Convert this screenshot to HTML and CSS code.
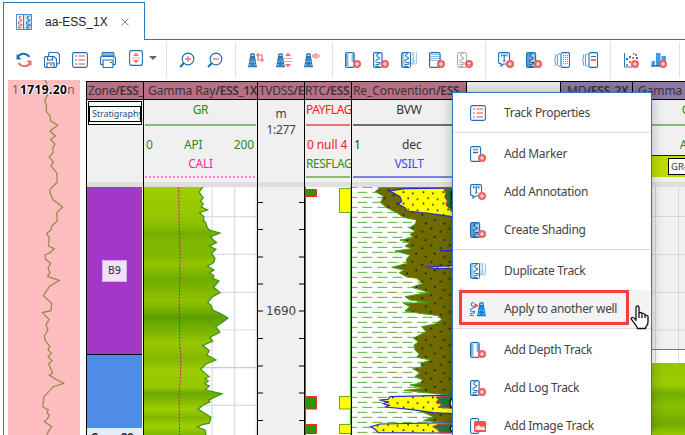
FILE: index.html
```html
<!DOCTYPE html>
<html lang="en">
<head>
<meta charset="utf-8">
<title>aa-ESS_1X</title>
<link rel="stylesheet" href="styles.css">
</head>
<body>
<svg class="defs" width="0" height="0">
  <defs>
    <symbol id="plus" viewBox="0 0 8 8"><circle cx="4" cy="4" r="4" fill="#e85f62"/><path d="M4 1.8v4.4M1.8 4h4.4" stroke="#ffd0d0" stroke-width="1.4"/></symbol>
    <symbol id="squig" viewBox="0 0 5 14"><path d="M3.8.5Q1 1 1.2 2.500T3.500 4.500 1.200 7 3.500 9.500 1.300 11.500 3.800 13.500" fill="none" stroke="currentColor" stroke-width="1.200"/></symbol>
    <symbol id="tower" viewBox="0 0 10 16"><path d="M3.300 1h3.400l2.300 14M3.300 1 1 15M2.800 4h4.400M2.300 8h5.400M1.800 12h6.400M0 15.300h10M3.200 4l4.400 4M6.800 4 2.400 8M2.400 8l5.800 4M7.600 8l-6 4M2 12l6 3M8 12l-6 3M3 1.500h4" fill="none" stroke="currentColor" stroke-width="1.250"/></symbol>
    <symbol id="i-list" viewBox="0 0 16 16"><rect x=".6" y=".6" width="14.800" height="14.800" rx="1.800" fill="#fff" stroke="#1f6fb8" stroke-width="1.100"/><path d="M3 4h2M3 8h2M3 12h2M6.500 4h6.500M6.500 8h6.500M6.500 12h6.500" stroke="#ee8585" stroke-width="1.500"/></symbol>
    <symbol id="i-refresh" viewBox="0 0 16 16"><path d="M1.800 5C4 .8 10.500.8 13.500 5" fill="none" stroke="#1f6fb8" stroke-width="2"/><path d="M.5 2v5.500h5z" fill="#1f6fb8"/><path d="M14.200 11C12 15.200 5.500 15.200 2.500 11" fill="none" stroke="#ed6a6a" stroke-width="2"/><path d="M15.500 14V8.500h-5z" fill="#ed6a6a"/></symbol>
    <symbol id="i-save" viewBox="0 0 16 16"><path d="M4.500 4V1.500l1-1h8l2 2V11l-1 1h-2" fill="none" stroke="#1f6fb8" stroke-width="1.100"/><path d="M1.500 4.500h8.500l2.500 2.500v7.500l-1 1h-10l-1-1v-9z" fill="#fff" stroke="#1f6fb8" stroke-width="1.100"/><path d="M3.500 5v3h5V5M3 15.500v-4.500h7v4.500M7 12v2" fill="none" stroke="#1f6fb8" stroke-width="1.200"/></symbol>
    <symbol id="i-print" viewBox="0 0 16 16"><path d="M2 4V1.500q0-1 1-1h10q1 0 1 1V4z" fill="#8db9df" stroke="#1f6fb8"/><path d="M3 12.500H1.500q-1 0-1-1V6.500q0-2 2-2h11q2 0 2 2v5q0 1-1 1H13" fill="#fff" stroke="#1f6fb8" stroke-width="1.200"/><path d="M3 8h10v6.500q0 1-1 1H4q-1 0-1-1z" fill="#fff" stroke="#1f6fb8" stroke-width="1.200"/><path d="M10 10.500h2M13 6h1" stroke="#1f6fb8"/></symbol>
    <symbol id="i-fit" viewBox="0 0 16 16"><rect x="1.600" y=".6" width="12.800" height="14.800" rx="2" fill="#fff" stroke="#1f6fb8" stroke-width="1.100"/><path d="M8 2.500 11 6H5zM8 13.500 11 10H5z" fill="#ee7979"/><path d="M4 8h8" stroke="#ee9b9b"/></symbol>
    <symbol id="i-zin" viewBox="0 0 16 16"><circle cx="9" cy="7" r="5.800" fill="#fff" stroke="#1f6fb8" stroke-width="1.200"/><path d="m5 11-4 4" stroke="#1f6fb8" stroke-width="2"/><path d="M9 4v6M6 7h6" stroke="#ec7777" stroke-width="1.400"/></symbol>
    <symbol id="i-zout" viewBox="0 0 16 16"><circle cx="9" cy="7" r="5.800" fill="#fff" stroke="#1f6fb8" stroke-width="1.200"/><path d="m5 11-4 4" stroke="#1f6fb8" stroke-width="2"/><path d="M6 7h6" stroke="#ec7777" stroke-width="1.400"/></symbol>
    <symbol id="i-wcrop" viewBox="0 0 16 16"><use href="#tower" width="9" height="16" color="#2878bd"/><path d="M10 1v7h6M8 3h6v7" fill="none" stroke="#e66" stroke-width="1.200"/></symbol>
    <symbol id="i-wfit" viewBox="0 0 16 16"><use href="#tower" width="9" height="16" color="#2878bd"/><path d="m12 .5 3 3.500H9zM12 15.500 15 12H9z" fill="#ee7070"/><path d="M8 6.500h8M8 9.500h8" stroke="#eea0a0"/></symbol>
    <symbol id="i-weye" viewBox="0 0 16 16"><use href="#tower" width="9" height="16" color="#2878bd"/><path d="M8 4q3.800-4 7.600 0-3.800 4-7.600 0z" fill="#fff" stroke="#e66"/><circle cx="11.800" cy="4" r="1.500" fill="#e99"/></symbol>
    <symbol id="i-depth" viewBox="0 0 16 16"><rect x=".6" y=".6" width="8.500" height="14.800" rx="1.500" fill="#fff" stroke="#1f6fb8" stroke-width="1.200"/><path d="M1 3h2.500M1 5h2.500M1 7h2.500M1 9h2.500M1 11h2.500M1 13h2.500M6.500 3H9M6.500 5H9M6.500 7H9M6.500 9H9" stroke="#1f6fb8"/><use href="#plus" x="8" y="8" width="8" height="8"/></symbol>
    <symbol id="i-log" viewBox="0 0 16 16"><rect x=".6" y=".6" width="8.500" height="14.800" rx="1.500" fill="#fff" stroke="#1f6fb8" stroke-width="1.200"/><use href="#squig" x="2.500" y="1" width="5" height="14" color="#2878bd"/><use href="#plus" x="8" y="8" width="8" height="8"/></symbol>
    <symbol id="i-dup" viewBox="0 0 16 16"><path d="M9 .8h3.500v9.700H9M15.400.5v9.500q0 2-2 2H10" fill="none" stroke="#a9c8e4" stroke-width="1.200"/><use href="#squig" x="10" y="1" width="4" height="11" color="#a9c8e4"/><rect x=".6" y=".6" width="8.800" height="14.800" rx="1.500" fill="#a9cdec" stroke="#1f6fb8" stroke-width="1.100"/><path d="M3.500 1H9v14H3.500z" fill="#fff"/><use href="#squig" x="3.500" y="1" width="5" height="14" color="#2878bd"/></symbol>
    <symbol id="i-grid" viewBox="0 0 16 16"><rect x=".6" y=".6" width="10.500" height="14.800" rx="1.500" fill="#fff" stroke="#1f6fb8" stroke-width="1.200"/><path d="M1.500 2.500h9M1.500 4.500h9M1.500 6.500h9M1.500 8.500h9" stroke="#2878bd" stroke-dasharray="1 1"/><use href="#plus" x="8" y="8" width="8" height="8"/></symbol>
    <symbol id="i-del" viewBox="0 0 16 16"><rect x=".6" y=".6" width="9" height="14.800" rx="1.500" fill="#fff" stroke="#aaa"/><use href="#squig" x="2.500" y="1" width="5" height="14" color="#aaa"/><circle cx="12" cy="12" r="4" fill="#e85f62"/><path d="m10.500 10.500 3 3m0-3-3 3" stroke="#ffe4e4" stroke-width="1.200"/></symbol>
    <symbol id="i-note" viewBox="0 0 16 16"><path d="M2 .6h8q1.500 0 1.500 1.500v8.400q0 1.500-1.500 1.500H5.500L3 14v-2.500H2Q.6 11.500.6 10V2Q.6.6 2 .6z" fill="#fff" stroke="#1f6fb8" stroke-width="1.100"/><path d="M3.500 4.500V3h5.500v1.500M6.250 3v6M5 9h2.500" fill="none" stroke="#1f6fb8" stroke-width="1.100"/><use href="#plus" x="8" y="8" width="8" height="8"/></symbol>
    <symbol id="i-shade" viewBox="0 0 16 16"><rect x=".6" y=".6" width="9" height="14.800" rx="1.500" fill="#a5cbea" stroke="#1f6fb8" stroke-width="1.200"/><path d="M1 1h3v14H1z" fill="#2878bd" opacity=".5"/><use href="#squig" x="3" y="1" width="5" height="14" color="#165c9f"/><use href="#plus" x="8" y="8" width="8" height="8"/></symbol>
    <symbol id="i-cards1" viewBox="0 0 16 16"><path d="M2 2Q-.5 8 2 14M6 1.500Q3.500 1.500 3.500 4v8q0 2.500 2.500 2.500" fill="none" stroke="#5b99cf"/><rect x="7" y=".6" width="8.500" height="14.800" rx="1.500" fill="#fff" stroke="#1f6fb8" stroke-width="1.100"/><path d="M9 3.500h5M9 5.500h5M9 7.500h5M9 9.500h5M9 11.500h5" stroke="#e66" stroke-dasharray="1 1"/></symbol>
    <symbol id="i-cards2" viewBox="0 0 16 16"><path d="M2 2Q-.5 8 2 14M6 1.500Q3.500 1.500 3.500 4v8q0 2.500 2.500 2.500" fill="none" stroke="#5b99cf"/><rect x="7" y=".6" width="8.500" height="14.800" rx="1.500" fill="#fff" stroke="#1f6fb8" stroke-width="1.100"/><path d="M9 4.500h5" stroke="#2878bd" stroke-width="1.200"/><path d="M9 8h5" stroke="#e66" stroke-width="2"/></symbol>
    <symbol id="i-scatter" viewBox="0 0 16 16"><path d="M1.500 1v14H9" fill="none" stroke="#2878bd"/><path d="M3 12h2v2H3zM6 9h2v2H6zM9 5h2v2H9zM12 2h2v2h-2z" fill="#e66"/><path d="M3 6h2v2H3zM6 4h2v2H6zM10 1h1.500v1.500H10zM13 5h2v2h-2z" fill="#2878bd"/><use href="#plus" x="8" y="8" width="8" height="8"/></symbol>
    <symbol id="i-bars" viewBox="0 0 16 16"><path d="M.5 9h3.500v5H.5zM10.500 4H15v8h-4.500z" fill="#4b9be0"/><path d="M5 1h4.500v13H5z" fill="#4299ea"/><path d="M0 14h9" stroke="#1f6fb8" stroke-width="1.500"/><use href="#plus" x="8" y="8" width="8" height="8"/></symbol>
    <symbol id="i-marker" viewBox="0 0 16 16"><rect x=".6" y=".6" width="10" height="14.800" rx="1.500" fill="#fff" stroke="#1f6fb8" stroke-width="1.100"/><path d="M3 3.500h5" stroke="#e66" stroke-width="1.500"/><path d="M3 6.500h5" stroke="#1f6fb8" stroke-width="1.500"/><use href="#plus" x="8" y="8" width="8" height="8"/></symbol>
    <symbol id="i-apply" viewBox="0 0 16 16"><use href="#squig" y="1" width="5" height="14" color="#1687dc"/><path d="m4.500 2 4 2.500-4 2.500z" fill="#f04949"/><use href="#tower" x="7" width="9" height="16" color="#0a80dc"/></symbol>
    <symbol id="i-image" viewBox="0 0 16 16"><rect x=".6" y=".6" width="8" height="14.800" rx="1.500" fill="#fff" stroke="#1f6fb8" stroke-width="1.100"/><rect x="4" y="3" width="12" height="11" rx="1.500" fill="#e95555"/><path d="m5.500 12v-3l3-2 3 2 2-1 1.500 2v2z" fill="#ffdcdc"/></symbol>
    <symbol id="i-doc" viewBox="0 0 16 16"><rect x=".6" y=".6" width="14.800" height="14.800" fill="#d3e6f6" stroke="#3b82c0"/><path d="M1 1h6v14H1z" fill="#fff"/><path d="M7.500 1v14" stroke="#3b82c0"/><use href="#squig" x="2" y="1" width="4.500" height="14" color="#dd6666"/><use href="#squig" x="10" y="1" width="4.500" height="14" color="#2878bd"/></symbol>

    <linearGradient id="gr" x1="0" y1="333" x2="0" y2="1077" gradientUnits="userSpaceOnUse">
      <stop offset="0" stop-color="#a0cc00"/><stop offset=".1" stop-color="#98c800"/><stop offset=".16" stop-color="#88bd00"/><stop offset=".185" stop-color="#73ad00"/><stop offset=".22" stop-color="#81b700"/><stop offset=".28" stop-color="#80b800"/><stop offset=".31" stop-color="#94c500"/><stop offset=".37" stop-color="#70ac00"/><stop offset=".4" stop-color="#78b200"/><stop offset=".46" stop-color="#90c300"/><stop offset=".525" stop-color="#5ca000"/><stop offset=".57" stop-color="#74b000"/><stop offset=".63" stop-color="#98c800"/><stop offset=".69" stop-color="#82b800"/><stop offset=".74" stop-color="#9ccb00"/><stop offset=".81" stop-color="#94c500"/><stop offset=".832" stop-color="#69a900"/><stop offset=".895" stop-color="#9dcd00"/><stop offset=".93" stop-color="#82b700"/><stop offset=".965" stop-color="#a0d000"/><stop offset="1" stop-color="#80b800"/>
    </linearGradient>
    <linearGradient id="gr2" x1="0" y1="0" x2="0" y2="1"><stop offset="0" stop-color="#97c500"/><stop offset=".3" stop-color="#9acd00"/><stop offset=".43" stop-color="#72af00"/><stop offset=".6" stop-color="#8bc000"/><stop offset=".85" stop-color="#70ad00"/><stop offset="1" stop-color="#9aca00"/></linearGradient>
    <pattern id="shale" x="187" y="327" width="45" height="30" patternUnits="userSpaceOnUse"><path d="M0 7h30M-15 22h30M30 22h30" stroke="#3fa512" stroke-width="2.600"/></pattern>
    <pattern id="silt" x="330" y="350" width="56" height="50" patternUnits="userSpaceOnUse"><path d="M0 0h56v50H0z" fill="#6f6b00"/><path d="M5 5h5v5H5zM34 14h5v5h-5zM16 30h5v5h-5zM45 40h5v5h-5z" fill="#151500"/></pattern>
    <pattern id="sand" x="300" y="340" width="60" height="34" patternUnits="userSpaceOnUse"><path d="M0 0h60v34H0z" fill="#ff0"/><path d="M8 6h5v5H8zM36 10h5v5h-5zM22 24h5v5h-5zM50 27h5v5h-5z" fill="#332f00"/></pattern>
  </defs>
</svg>

<div class="app">
  <div class="tabs">
    <div class="tab"><svg class="icon"><use href="#i-doc"/></svg><span class="tab-name">aa-ESS_1X</span><svg class="close" viewBox="0 0 8 8"><path d="m.5.5 7 7m0-7-7 7" stroke="#888"/></svg></div>
    <div class="tab-rest"></div>
  </div>
  <div class="toolbar">
    <div class="group first">
      <svg class="tool"><use href="#i-refresh"/></svg><svg class="tool"><use href="#i-save"/></svg><svg class="tool"><use href="#i-list"/></svg><svg class="tool"><use href="#i-print"/></svg><svg class="tool fit"><use href="#i-fit"/></svg><span class="caret"></span>
    </div>
    <div class="group"><svg class="tool"><use href="#i-zin"/></svg><svg class="tool"><use href="#i-zout"/></svg></div>
    <div class="group"><svg class="tool"><use href="#i-wcrop"/></svg><svg class="tool"><use href="#i-wfit"/></svg><svg class="tool"><use href="#i-weye"/></svg></div>
    <div class="group"><svg class="tool"><use href="#i-depth"/></svg><svg class="tool"><use href="#i-log"/></svg><svg class="tool"><use href="#i-dup"/></svg><svg class="tool"><use href="#i-grid"/></svg><svg class="tool"><use href="#i-del"/></svg></div>
    <div class="group"><svg class="tool"><use href="#i-note"/></svg><svg class="tool"><use href="#i-shade"/></svg><svg class="tool"><use href="#i-cards1"/></svg><svg class="tool"><use href="#i-cards2"/></svg></div>
    <div class="group"><svg class="tool"><use href="#i-scatter"/></svg><svg class="tool"><use href="#i-bars"/></svg></div>
    <div class="group last"></div>
  </div>

  <div class="work">
    <div class="overview">
      <svg class="plot" viewBox="24 12 216 1065"><polyline fill="none" stroke="#9a8448" stroke-width="3.600" points="135,12 142,28 133,42 143,55 134,75 140,92 138,105 150,120 152,135 173,148 150,165 166,180 152,190 165,205 158,215 160,228 148,243 160,258 153,270 170,290 172,318 150,340 150,352 160,372 188,393 170,410 172,435 155,450 153,462 140,472 148,485 145,510 163,518 150,530 135,537 137,550 152,562 144,577 150,590 143,602 178,613 150,630 130,659 155,682 153,704 127,710 147,730 138,747 144,762 133,780 136,794 150,812 144,822 154,832 144,842 156,854 146,864 158,892 148,897 162,907 191,922 160,932 132,962 128,992 145,1002 140,1010 148,1017 142,1029 133,1037 155,1052 145,1067 140,1077"/></svg>
      <div class="depth-label"><span class="dim">1</span><b>1719.20</b><span class="dim">n</span></div>
    </div>

    <div class="tracks">
      <section class="track zone">
        <h2>Zone<b>/ESS_1X</b></h2>
        <div class="scale"><div class="strat"><span>Stratigraphy</span></div></div>
        <div class="zones"><div class="z1"><span>B9</span></div><div class="z2"></div><div class="z3">Cape 20</div></div>
      </section>

      <section class="track gamma">
        <h2>Gamma Ray<b>/ESS_1X</b></h2>
        <div class="scale green">
          <p>GR</p><hr><div class="range"><span>0</span><span>API</span><span>200</span></div><p class="cali">CALI</p><hr class="dots">
        </div>
        <svg class="plot" viewBox="12 333 339 744">
          <path d="M216 333v744M284 333v744M349 333v744M12 422h339M12 535h339M12 649h339M12 762h339M12 988h339" stroke="#dcdcdc" stroke-width="3.500"/><path d="M12 875h339" stroke="#c4c4ff" stroke-width="4"/>
          <polygon fill="url(#gr)" stroke="#37911a" stroke-width="3.600" points="6,325 188,325 188,333 178,348 183,357 190,365 182,375 190,385 184,393 203,402 178,410 192,422 190,432 197,440 202,455 208,462 240,471 212,482 220,492 230,500 208,510 228,520 215,532 225,547 221,560 202,571 222,582 209,590 222,600 217,606 237,615 221,633 240,650 215,664 203,680 212,687 219,703 240,712 264,726 248,738 227,752 240,769 210,784 218,796 188,808 208,824 201,837 228,852 198,864 182,880 207,902 195,908 205,915 194,923 208,930 196,942 246,953 207,972 210,978 190,987 174,999 213,1024 208,1042 186,1046 172,1053 195,1062 200,1085 6,1085"/>
          <polyline fill="none" stroke="#d11774" stroke-width="3" stroke-dasharray="6 4" points="116,333 117,420 120,530 118,700 119,800 123,850 121,910 117,960 119,1077"/>
        </svg>
      </section>

      <section class="track tvd">
        <h2>TVDSS<b>/ESS_1X</b></h2>
        <div class="scale unit"><p>m</p><p>1:277</p></div>
        <div class="ruler"><svg class="plot" viewBox="0 0 46 248"><path d="M0 15.500h5M41 15.500h5M0 42.500h5M41 42.500h5M0 70h5M41 70h5M0 97h5M41 97h5M0 124h5M41 124h5M0 151.500h5M41 151.500h5M0 179h5M41 179h5M0 206h5M41 206h5M0 233.500h5M41 233.500h5" stroke="#000"/></svg><span class="ruler-num">1690</span></div>
      </section>

      <section class="track rtc">
        <h2>RTC<b>/ESS_1X</b></h2>
        <div class="scale red"><p>PAYFLAG</p><hr><div class="range"><span>0 null 4</span></div><p class="res">RESFLAG</p><hr class="reshr"></div>
        <svg class="plot" viewBox="0 0 46 248"><path d="M.5 0v248" stroke="#cf3342"/><path d="M45.500 0v248" stroke="#4fa52c"/><g fill="#2d9500" stroke="#f0262a"><path d="M.5 2.500h11v7H.5z"/><path d="M.5 209.500h11v12.500H.5zM.5 237.500h11v9H.5z"/></g><path d="M34.500 1.500H46v24H34.500zM34.500 209.500H46v12.500H34.500zM34.500 237.500H46v9H34.500z" fill="#ff0" stroke="#67ad22"/></svg>
      </section>

      <section class="track re">
        <h2>Re_Convention<b>/ESS_1X</b></h2>
        <div class="scale dark"><p>BVW</p><hr><div class="range"><span>1</span><span>dec</span><span></span></div><p class="vsilt">VSILT</p><hr class="vhr"></div>
        <svg class="plot" viewBox="156 333 342 744">
          <path d="M156 333h342v744H156z" fill="url(#shale)"/>
          <polygon fill="url(#silt)" stroke="#42a51b" stroke-width="3" points="500,333 240,335 225,347 250,360 242,380 260,395 290,410 310,424 350,432 345,445 328,455 345,465 330,475 340,485 300,492 330,500 315,510 335,518 285,525 330,537 318,552 322,562 275,574 312,582 298,590 318,602 350,607 368,622 335,634 388,649 315,662 330,672 385,680 310,682 330,692 315,705 360,712 415,719 425,731 405,744 365,752 378,767 340,787 355,797 342,807 345,822 358,834 350,844 392,852 362,862 365,872 338,878 360,890 345,902 368,912 360,922 330,927 370,937 312,943 395,952 456,958 500,960"/>
          <polygon fill="url(#silt)" stroke="#42a51b" stroke-width="3" points="500,1005 365,1007 400,1022 370,1034 420,1038 500,1045"/>
          <g fill="url(#sand)" stroke="#2828cf" stroke-width="3.500">
            <polygon points="500,336 315,338 270,345 300,362 305,375 295,385 315,395 320,405 380,411 456,422 500,424"/>
            <polygon points="500,957 400,959 270,962 264,970 238,972 262,978 250,983 268,988 255,993 330,1000 400,1010 500,1016"/>
            <polygon points="500,1041 400,1041 240,1044 212,1052 225,1060 235,1070 400,1071 500,1071"/>
            <polygon points="500,568 456,569 376,573 410,578 500,576"/>
          </g>
          <path d="M456 336h-26l8 15-4 12 8 12-4 12 10 10 8 12M456 959l-48 4 8 9-8 6 18 8-12 8 42 3M456 1044l-40 1-18 7 14 8 8 10h36" fill="#257b32" stroke="#dc2685" stroke-width="3"/>
          <path d="M460 338q-12 18-3 35l-5 14 8 16zM460 964q-15 10-8 29h8zM460 1047q-16 8-4 20h4z" fill="#eee" stroke="#111" stroke-width="4"/>
          <path d="M420 524h38" stroke="#2828cf" stroke-width="4"/>
        </svg>
      </section>

      <section class="gap"><h2></h2><div class="scale"></div></section>
      <section class="track md"><h2>MD<b>/ESS_2X</b></h2><div class="scale"></div></section>
      <section class="track gamma2">
        <h2>Gamma Ray</h2>
        <div class="scale green"><p>GR</p><hr><div class="range"><span></span><span>API</span><span></span></div><div class="flag"><span>GR-CALI</span></div></div>
        <svg class="plot" viewBox="0 0 113 248"><path d="M0 0h113v162H0z" fill="#f1f1f1"/><path d="M22.500 0v176M45.500 0v176M0 29.500h113M0 67.500h113M0 105.500h113M0 143h113" stroke="#d6d6d6"/><path d="M0 162.500h113" stroke="#777"/><path d="M0 176h113v72H0z" fill="url(#gr2)"/></svg>
      </section>
    </div>
  </div>
</div>

<div class="menu">
  <div class="item"><svg class="icon"><use href="#i-list"/></svg>Track Properties</div>
  <div class="sep"></div>
  <div class="item"><svg class="icon"><use href="#i-marker"/></svg>Add Marker</div>
  <div class="item"><svg class="icon"><use href="#i-note"/></svg>Add Annotation</div>
  <div class="item"><svg class="icon"><use href="#i-shade"/></svg>Create Shading</div>
  <div class="sep"></div>
  <div class="item"><svg class="icon"><use href="#i-dup"/></svg>Duplicate Track</div>
  <div class="item hover"><svg class="icon"><use href="#i-apply"/></svg>Apply to another well</div>
  <div class="sep"></div>
  <div class="item"><svg class="icon"><use href="#i-depth"/></svg>Add Depth Track</div>
  <div class="item"><svg class="icon"><use href="#i-log"/></svg>Add Log Track</div>
  <div class="item"><svg class="icon"><use href="#i-image"/></svg>Add Image Track</div>
</div>
<div class="highlight"></div>
<svg class="cursor" viewBox="0 0 19 25"><path d="M6 16V2.500Q6 1 7.500 1T9 2.500V9Q9 7.500 10.500 7.500T12 9v.5Q12 8 13.500 8.500T15 10v.8Q15.500 9.500 17 10.500T18 12v5q0 3-2 4.500l-.5 2H7.500L6.500 21 1.500 14.500q-.8-1.500.5-2T6 15z" fill="#fff" stroke="#15151d" stroke-width="1.300"/><path d="M9 9v4M12 9.500V13M15 10.500V13" stroke="#15151d" stroke-width="1.300"/></svg>
</body>
</html>
```
FILE: styles.css
```css
* { box-sizing: border-box; }
body { margin: 0; width: 685px; height: 435px; overflow: hidden; background: #fff; font-family: "Noto Sans", sans-serif; font-size: 12px; color: #444; }
.defs { position: absolute; }
.app { display: flex; flex-direction: column; height: 435px; }
.tabs { display: flex; height: 40px; padding: 2px 0 0 3px; }
.tab { display: flex; align-items: center; width: 142px; padding-left: 12px; border: 1px solid #2b79bc; border-bottom: 0; font-family: "Liberation Sans", sans-serif; color: #222; }
.tab-rest { flex: 1; border-bottom: 1px solid #2b79bc; }
.tab-name { width: 76px; margin-left: 13px; }
.close { width: 8px; height: 8px; }
.icon { width: 16px; height: 16px; flex: none; }
.toolbar { display: flex; align-items: center; height: 40px; margin-left: 3px; border-left: 1px solid #2b79bc; overflow: hidden; }
.group { display: flex; flex: none; align-items: center; height: 36px; padding: 0 6px; border-left: 1px solid #e3e3e3; }
.group.first { border: 0; width: 162px; }
.group.last { padding: 0; }
.tool { width: 16px; height: 16px; margin: 0 6px; flex: none; }
.fit { margin-top: -4px; }
.caret { border: 4px solid transparent; border-top-color: #666; border-bottom: 0; margin: -4px 0 0 -1px; }

.work { display: flex; flex: 1; min-height: 0; margin-left: 3px; padding-left: 4px; border-left: 1px solid #2b79bc; }
.overview { position: relative; flex: none; width: 72px; margin-right: 6px; background: #fbbdbd; }
.plot { display: block; flex: none; width: 100%; height: 248px; }
.overview .plot { height: 355px; }
.depth-label { position: absolute; left: 4px; top: 1px; display: flex; font-size: 12px; line-height: 17px; }
.depth-label b { color: #000; letter-spacing: .4px; text-shadow: 0 0 2px #fff, 0 0 2px #fff, 1px 0 1px #fff, -1px 0 1px #fff; }
.dim { width: 8px; color: #985055; }

.tracks { display: flex; flex: none; width: 599px; padding-top: 1px; overflow: hidden; }
.track, .gap { flex: none; display: flex; flex-direction: column; border-left: 1px solid #000; overflow: hidden; }
.track h2, .gap h2 { flex: none; height: 19px; margin: 0; padding-left: 1px; border: solid #000; border-width: 1px 0; background: #b77085; font-size: 12px; line-height: 18px; font-weight: 400; letter-spacing: -.1px; white-space: nowrap; overflow: hidden; color: #3f3036; }
.track h2 b { font-weight: 600; letter-spacing: -.35px; }
.scale { flex: none; height: 87px; border-bottom: 5px solid #dfdfdf; background: #f0f0f0; overflow: hidden; }
.zone { width: 57px; }
.track.zone h2 { letter-spacing: -.3px; }
.gamma { width: 114px; }
.track.gamma h2 { padding-left: 4px; }
.tvd { width: 47px; }
.track.tvd h2 { letter-spacing: -.3px; }
.rtc { width: 47px; }
.track.rtc h2 { padding-left: 0; letter-spacing: -.2px; }
.re { width: 115px; }
.gap { width: 94px; }
.gap h2 { background: #ececec; }
.md { width: 72px; }
.track.md h2 { padding-left: 6px; background: #8b7aa4; }
.gamma2 { width: 114px; }
.track.gamma2 h2 { padding-left: 5px; background: #8b7aa4; }

.scale p { margin: 0; text-align: center; line-height: 19px; height: 22px; letter-spacing: -.3px; }
.scale hr { height: 2px; margin: 2px 1px 0; border: 0; background: #85bd75; }
.range { display: flex; justify-content: space-between; height: 18px; margin-top: 10px; padding: 0 3px 0 2px; line-height: 18px; letter-spacing: -.1px; }
.scale .range + p { height: 17px; }
.green { color: #36851c; }
.green .cali { color: #f229a3; }
.scale .dots { margin-top: 5px; height: 2px; background: repeating-linear-gradient(90deg, #f27dc3 0 2px, #f0f0f0 2px 4px); }
.unit { padding-top: 4px; }
.unit p { height: 16px; }
.red { color: #e92222; }
.scale.red p { margin-left: 1px; text-align: left; white-space: nowrap; letter-spacing: -.45px; }
.scale.red hr { background: #f07070; }
.scale.red .res { color: #368c1c; }
.scale.red .reshr { margin-top: 5px; background: #8bbd78; }
.dark { color: #333; }
.scale.dark hr { background: #6e6e6e; }
.scale .vsilt { color: #4a42ef; }
.scale.dark .vhr { margin-top: 5px; background: #817cf0; }

.strat { height: 24px; margin: 1px 1px 0; border: 1px solid #000; padding-top: 4px; background: #fbfffb; }
.strat span { display: block; height: 16px; border: 1px solid #000; padding-left: 2px; font-size: 9px; letter-spacing: -.1px; line-height: 14px; color: #24537f; white-space: nowrap; overflow: hidden; }
.zones { display: flex; flex-direction: column; height: 248px; padding-right: 1px; }
.z1 { height: 168px; padding-top: 73px; border-bottom: 1px solid #000; background: #a338c8; text-align: center; }
.z1 span { display: inline-block; width: 25px; height: 22px; border: 1px solid #d5b2e4; background: #f2e0f7; color: #333; font: 11px/20px "DejaVu Sans Condensed", "DejaVu Sans", sans-serif; }
.z2 { height: 73px; background: #4f8ce7; }
.z3 { height: 7px; padding-left: 4px; background: #e3ecfa; color: #222; font-size: 11px; font-weight: 700; overflow: hidden; white-space: nowrap; line-height: 17px; }
.ruler { position: relative; height: 248px; background: #f0f0f0; }
.ruler-num { position: absolute; top: 116px; left: 8px; font: 12px/16px "DejaVu Sans", sans-serif; letter-spacing: -.1px; }
.flag { height: 22px; margin-top: 1px; padding: 2px 0 0 35px; border-top: 1px solid #222; background: #bddc00; }
.flag span { display: block; height: 17px; padding-left: 2px; border: 1px solid #000; background: #fff; font-size: 9.500px; line-height: 15px; white-space: nowrap; color: #333; }

.menu { position: absolute; left: 452px; top: 92px; width: 200px; height: 343px; padding-top: 1px; border: solid #2b79bc; border-width: 1px 1px 0; background: #fff; box-shadow: 0 0 12px rgba(0, 0, 0, .25); overflow: hidden; }
.item { display: flex; align-items: center; gap: 18px; height: 38px; padding: 0 0 1px 15px; margin: 0 1px 0 2px; letter-spacing: -.32px; white-space: nowrap; }
.sep { height: 3px; border-top: 1px solid #dcdcdc; }
.hover { border-radius: 5px; background: #f3f3f3; }
.highlight { position: absolute; left: 459px; top: 290px; width: 170px; height: 35px; border: 3px solid #f53e3e; }
.cursor { position: absolute; left: 630px; top: 305px; width: 19px; height: 25px; }
```
